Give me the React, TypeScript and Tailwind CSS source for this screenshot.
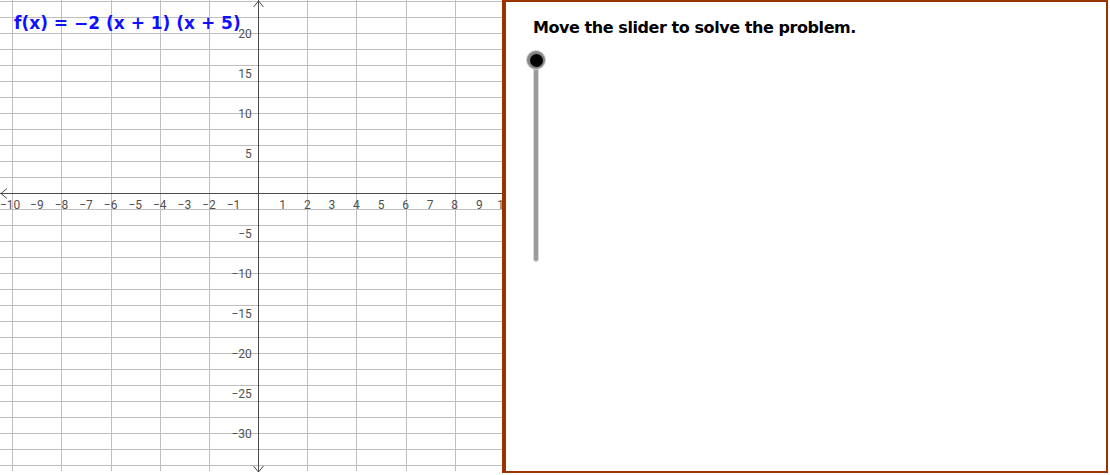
import React from 'react';

// graph geometry, measured off the picture
const ORIGIN_X = 258.1;
const ORIGIN_Y = 193.3;
const UNIT_X = 24.58;
const UNIT_Y = 8;
const W = 502;
const H = 473;

const px = (v: number) => Math.round(v) + 0.5;

function Graph() {
  const vLines: number[] = [];
  for (let k = -10; k <= 10; k += 2) {
    if (k === 0) continue;
    const x = ORIGIN_X + k * UNIT_X;
    if (x > 0 && x < W) vLines.push(px(x));
  }
  const hLines: number[] = [];
  for (let k = -24; k <= 36; k += 2) {
    if (k === 0) continue;
    const y = ORIGIN_Y + k * UNIT_Y;
    if (y > 0 && y < H - 2) hLines.push(px(y));
  }
  const xLabels = [-10, -9, -8, -7, -6, -5, -4, -3, -2, -1, 1, 2, 3, 4, 5, 6, 7, 8, 9, 10];
  const yLabels = [20, 15, 10, 5, -5, -10, -15, -20, -25, -30];
  const fmt = (n: number) => (n < 0 ? `\u2212${-n}` : `${n}`);
  const ax = px(ORIGIN_X);
  const ay = px(ORIGIN_Y);

  return (
    <svg width={W} height={H} className="block" style={{ fontFamily: 'Roboto, "Liberation Sans", sans-serif' }}>
      {vLines.map((x) => (
        <line key={`v${x}`} x1={x} y1={0} x2={x} y2={H - 2} stroke="#bebebe" strokeWidth={1} />
      ))}
      {hLines.map((y) => (
        <line key={`h${y}`} x1={0} y1={y} x2={W} y2={y} stroke="#bebebe" strokeWidth={1} />
      ))}

      {/* axes */}
      <line x1={0} y1={ay} x2={W} y2={ay} stroke="#4a4a4a" strokeWidth={1} />
      <line x1={ax} y1={0} x2={ax} y2={H - 1} stroke="#4a4a4a" strokeWidth={1} />
      <polyline points={`7,${ay - 5} 1,${ay} 7,${ay + 5}`} fill="none" stroke="#4a4a4a" strokeWidth={1} />
      <polyline points={`${ax - 5},7 ${ax},1 ${ax + 5},7`} fill="none" stroke="#4a4a4a" strokeWidth={1} />
      <polyline points={`${ax - 5},${H - 7} ${ax},${H - 1} ${ax + 5},${H - 7}`} fill="none" stroke="#4a4a4a" strokeWidth={1} />

      {xLabels.map((n) => {
        const x = ORIGIN_X + n * UNIT_X;
        const first = n === -10;
        return (
          <text key={`xl${n}`} x={first ? 0 : x} y={209.3} fontSize={12} fill="#505050" textAnchor={first ? 'start' : 'middle'}>
            {fmt(n)}
          </text>
        );
      })}
      {yLabels.map((n) => (
        <text key={`yl${n}`} x={251.8} y={ORIGIN_Y - n * UNIT_Y + 4.2} fontSize={12} fill="#505050" textAnchor="end">
          {fmt(n)}
        </text>
      ))}
    </svg>
  );
}

function Slider() {
  return (
    <div className="relative ml-[28px] mt-[22px] h-[201px] w-[4px] rounded-b-sm bg-[#9b9b9b] shadow-[0_0_0_1px_#dcdcdc]">
      <div className="absolute left-[-7px] top-[-9px] flex h-[18px] w-[18px] items-center justify-center rounded-full bg-[#858585] shadow-[0_0_0_1px_#cfcfcf]">
        <div className="h-[13px] w-[13px] rounded-full bg-black" />
      </div>
    </div>
  );
}

export default function App() {
  return (
    <div className="flex h-[475px] w-[1110px] bg-white">
      <div className="relative h-[473px] w-[502px] overflow-hidden">
        <Graph />
        <span
          className="absolute left-[14px] top-[12px] whitespace-pre text-[17px] font-bold leading-[22px] text-[#1010ff]"
          style={{ fontFamily: '"DejaVu Sans", Verdana, sans-serif' }}
        >
          {'f(x) = \u22122 (x + 1) (x + 5)'}
        </span>
      </div>
      <div
        className="h-[473px] w-[606px] border-b-2 border-l-4 border-r-2 border-t-2 border-[#993300] pt-[16px]"
        style={{ fontFamily: '"DejaVu Sans", Verdana, sans-serif' }}
      >
        <p className="pl-[27px] text-[16px] font-bold leading-[20px] tracking-[-0.43px] text-black">
          Move the slider to solve the problem.
        </p>
        <Slider />
      </div>
    </div>
  );
}
